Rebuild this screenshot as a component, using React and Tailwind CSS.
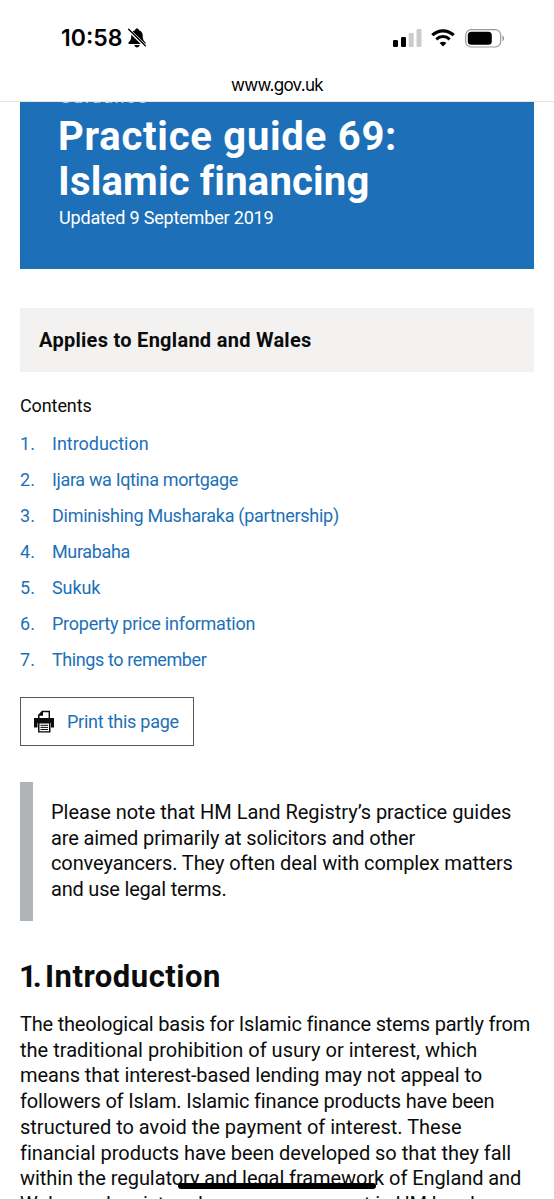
import React from 'react';

const contents = [
  { label: 'Introduction', tracking: 'tracking-[-0.02px]' },
  { label: 'Ijara wa Iqtina mortgage', tracking: 'tracking-[-0.35px]' },
  { label: 'Diminishing Musharaka (partnership)', tracking: 'tracking-[-0.27px]' },
  { label: 'Murabaha', tracking: 'tracking-[-0.35px]' },
  { label: 'Sukuk', tracking: 'tracking-[-0.1px]' },
  { label: 'Property price information', tracking: 'tracking-[-0.25px]' },
  { label: 'Things to remember', tracking: 'tracking-[-0.4px]' },
];

const noteLines = [
  { text: 'Please note that HM Land Registry’s practice guides', tracking: 'tracking-[-0.02px]' },
  { text: 'are aimed primarily at solicitors and other', tracking: 'tracking-[-0.11px]' },
  { text: 'conveyancers. They often deal with complex matters', tracking: 'tracking-[-0.1px]' },
  { text: 'and use legal terms.', tracking: 'tracking-[-0.2px]' },
];

const introLines = [
  { text: 'The theological basis for Islamic finance stems partly from', tracking: 'tracking-[-0.21px]' },
  { text: 'the traditional prohibition of usury or interest, which', tracking: 'tracking-[0.02px]' },
  { text: 'means that interest-based lending may not appeal to', tracking: 'tracking-[-0.08px]' },
  { text: 'followers of Islam. Islamic finance products have been', tracking: 'tracking-[-0.18px]' },
  { text: 'structured to avoid the payment of interest. These', tracking: 'tracking-normal' },
  { text: 'financial products have been developed so that they fall', tracking: 'tracking-[-0.03px]' },
  { text: 'within the regulatory and legal framework of England and', tracking: 'tracking-[-0.07px]' },
  { text: 'Wales and registered as an arrangement in HM Land', tracking: 'tracking-[-0.2px]' },
];

function TextLines({ lines }) {
  return lines.map((line) => (
    <span key={line.text} className={`block whitespace-nowrap ${line.tracking}`}>
      {line.text}
    </span>
  ));
}

function MutedBell() {
  return (
    <svg viewBox="0 0 18 20" className="ml-[6px] h-5 w-[18px]">
      <path d="M9 .6c-1 0-1.800.7-1.900 1.600C4.600 3 3.300 5 3.300 7.500c0 4-1 5.300-2.600 6.700-.7.600-.4 1.800.6 1.800h15.400c1 0 1.300-1.200.6-1.800-1.600-1.400-2.600-2.700-2.600-6.700 0-2.500-1.300-4.500-3.800-5.300C10.800 1.300 10 .6 9 .6zM6.300 17c.3 1.400 1.400 2.400 2.700 2.400s2.400-1 2.700-2.400z" fill="#000" />
      <path d="M0 1.200 17.500 18.300" stroke="#fff" strokeWidth="3.200" />
      <path d="M.6 1.300 17.400 17.800" stroke="#000" strokeWidth="1.400" strokeLinecap="round" />
    </svg>
  );
}

function StatusIcons() {
  return (
    <div className="flex items-center">
      <svg viewBox="0 0 29 18" className="h-[18px] w-[29px]">
        <rect x="0" y="11" width="5" height="7" rx="1.300" fill="#000" />
        <rect x="8" y="8" width="5" height="10" rx="1.300" fill="#000" />
        <rect x="15.700" y="4" width="5" height="14" rx="1.300" fill="#ccc" />
        <rect x="23.500" y="0" width="5" height="18" rx="1.300" fill="#ccc" />
      </svg>
      <svg viewBox="0 0 24 18" className="ml-[9px] h-[18px] w-6">
        <path d="M1.300 6.200C7.500.3 16.500.3 22.700 6.200" fill="none" stroke="#000" strokeWidth="3.200" />
        <path d="M5.300 10.300c3.900-3.600 9.500-3.600 13.400 0" fill="none" stroke="#000" strokeWidth="3" />
        <path d="M12 17.500 8.600 14c1.900-1.700 4.900-1.700 6.800 0z" fill="#000" />
      </svg>
      <svg viewBox="0 0 40 19" className="ml-[10px] h-[19px] w-10">
        <rect x=".7" y=".7" width="35" height="17.300" rx="5.500" fill="#fff" stroke="#999" strokeWidth="1.200" />
        <rect x="2.800" y="2.800" width="24" height="13" rx="3.500" fill="#000" />
        <path d="M37.500 6.500c1.900.8 1.900 4.900 0 5.700z" fill="#888" />
      </svg>
    </div>
  );
}

function PrintIcon() {
  return (
    <svg viewBox="0 0 20 23" className="h-[23px] w-5">
      <path d="M0 8h20v9.500h-3V13H3.500v4.500H0z" fill="#0b0c0c" />
      <path d="M4 9V5l4-4.200h8V9z" fill="#0b0c0c" />
      <path d="M5.500 8V5.700H9V2.200h5.600V8z" fill="#fff" />
      <path d="M4 12.500h12.500v10H4z" fill="#0b0c0c" />
      <path d="M5.500 13.500H15v7.700H5.500z" fill="#fff" />
      <path d="M6.500 15.300H14M6.500 17.400H14M6.500 19.500H14" stroke="#0b0c0c" strokeWidth="1" />
    </svg>
  );
}

export default function App() {
  return (
    <div className="relative flex h-[1200px] w-[554px] flex-col overflow-hidden bg-white font-['Roboto',sans-serif] text-[#0b0c0c]">
      <header className="h-[102px] shrink-0 border-b border-[#e4e4e4] text-black">
        <div className="flex h-[76px] items-center justify-between pl-[61px] pr-[49px]">
          <div className="flex items-center">
            <span className="font-['Inter',sans-serif] text-[23px] font-semibold leading-none">10:58</span>
            <MutedBell />
          </div>
          <StatusIcons />
        </div>
        <p className="text-center font-['Inter',sans-serif] text-[17px] leading-[18px] tracking-[-0.7px]">www.gov.uk</p>
      </header>

      <main className="flex flex-col px-5">
        {/* Title banner, scrolled partly under the toolbar */}
        <section className="h-[167px] overflow-hidden bg-[#1d70b8] pl-[39px] text-white">
          <p className="-mt-[18px] h-[30px] text-[18px] leading-[26px] tracking-[1.800px] text-white/70">Guidance</p>
          <h1 className="text-[40px] font-bold leading-[45px]">
            <span className="-ml-px block tracking-[0.750px]">Practice guide 69:</span>
            <span className="-ml-px block tracking-[0.200px]">Islamic financing</span>
          </h1>
          <p className="text-[18px] leading-[28px] tracking-[-0.170px]">Updated 9 September 2019</p>
        </section>

        <section className="mt-[39px] flex h-16 items-center bg-[#f3f2f1] pl-[19px]">
          <h2 className="text-[20px] font-bold tracking-[0.280px]">Applies to England and Wales</h2>
        </section>

        <nav className="mt-[21px] text-[18px]">
          <h2 className="leading-[26px] tracking-[-0.1px]">Contents</h2>
          <ol className="mt-[6px] text-[#1d70b8]">
            {contents.map((item, i) => (
              <li key={item.label} className="flex h-9 items-center">
                <span className="w-8">{i + 1}.</span>
                <a href="#" className={`whitespace-nowrap ${item.tracking}`}>{item.label}</a>
              </li>
            ))}
          </ol>
        </nav>

        <button className="mt-5 flex h-[49px] w-[174px] items-center border border-[#505a5f] pl-[13px] text-[18px] text-[#1d70b8]">
          <PrintIcon />
          <span className="ml-[13px] whitespace-nowrap tracking-[-0.25px]">Print this page</span>
        </button>

        <div className="mt-9 h-[139px] border-l-[13px] border-[#b1b4b6] pl-[18px] pt-[18px] text-[20px] leading-[25.700px]">
          <p><TextLines lines={noteLines} /></p>
        </div>

        <h2 className="-ml-px mt-9 flex text-[31px] font-bold leading-[40px]">
          <span className="w-[26px] tracking-[-4px]">1.</span>
          <span className="tracking-[0.500px]">Introduction</span>
        </h2>
        <p className="mt-[15px] text-[20px] leading-[25.700px]"><TextLines lines={introLines} /></p>
      </main>

      <div className="absolute bottom-[11px] left-[178px] h-[6px] w-[198px] rounded-full bg-black" />
      <div className="absolute bottom-0 left-0 h-px w-full bg-[#d0d0d0]" />
    </div>
  );
}
